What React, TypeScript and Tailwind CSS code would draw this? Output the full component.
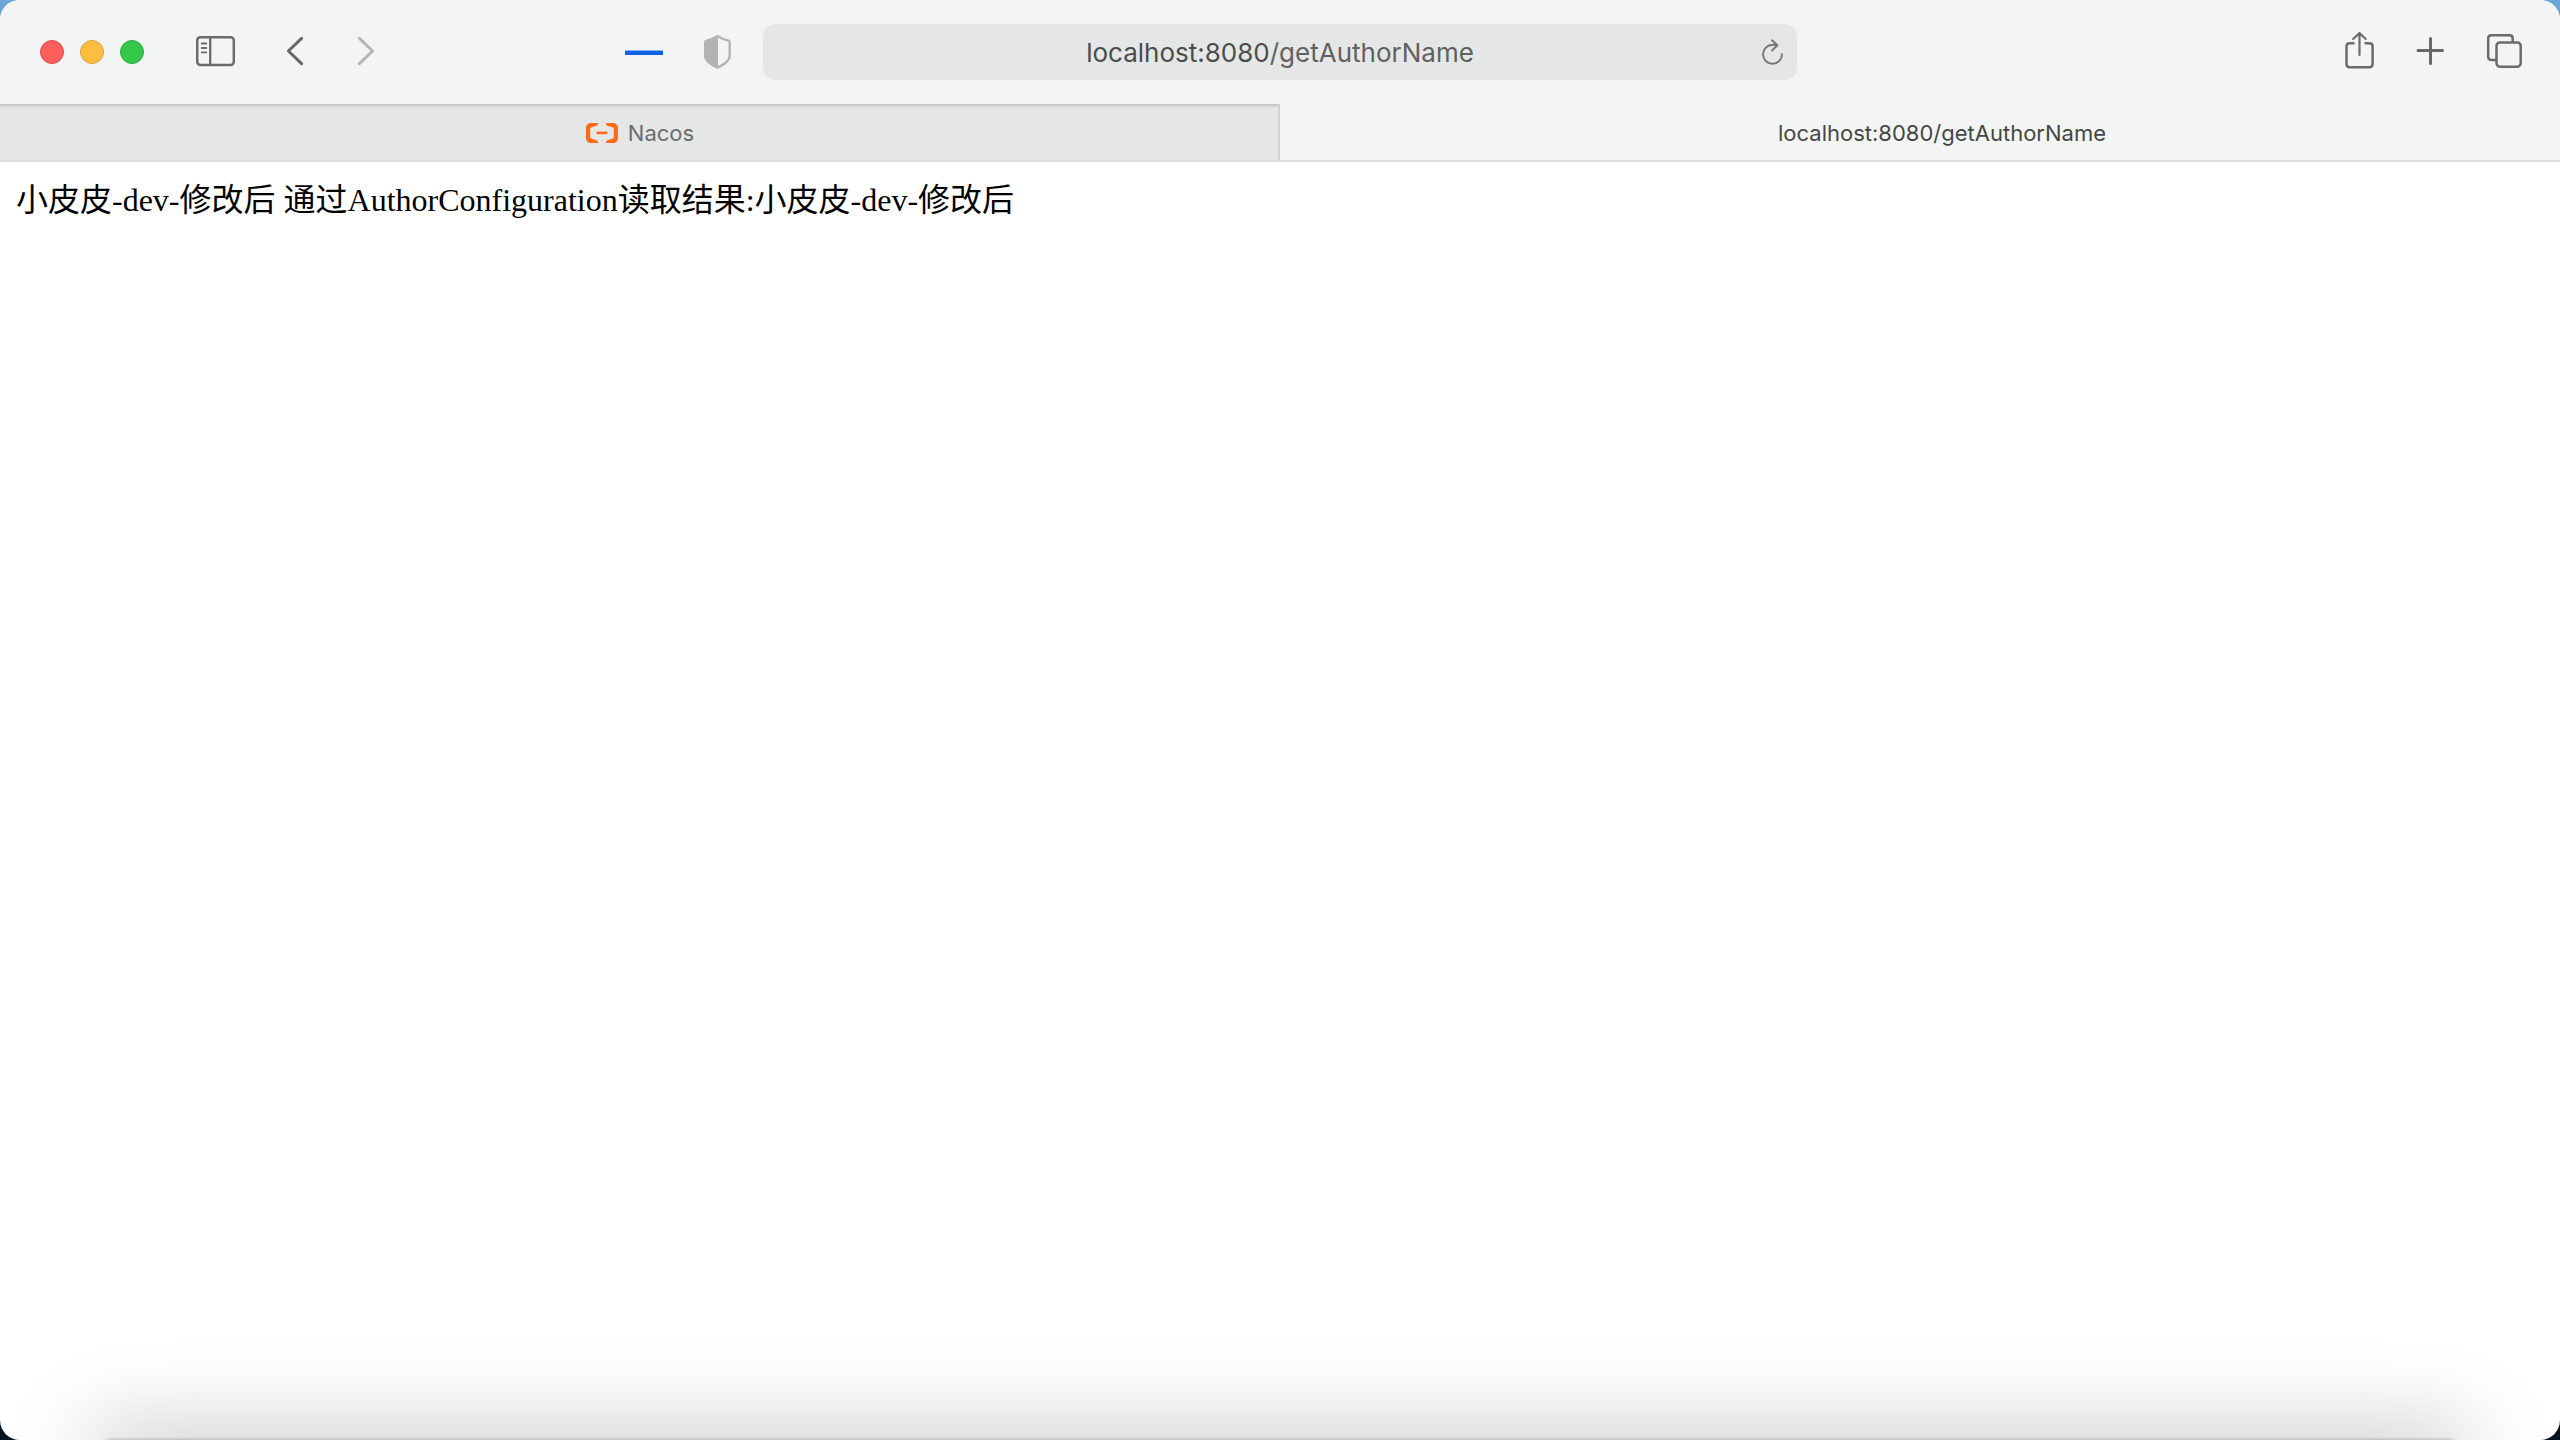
import React from "react";

function SidebarIcon() {
  return (
    <svg width="40" height="32" viewBox="0 0 40 32" fill="none" stroke="#6a6c6b" aria-hidden="true">
      <rect x="1.2" y="1.2" width="36.6" height="27.8" rx="3.2" strokeWidth="2.5" />
      <path d="M14.2 1.5V29" strokeWidth="2.3" />
      <path d="M5.7 7.5h4.6M5.7 12h4.6M5.7 16.4h4.6" strokeWidth="1.8" strokeLinecap="round" />
    </svg>
  );
}

function ChevronIcon({ forward = false }: { forward?: boolean }) {
  return (
    <svg
      width="20"
      height="32"
      viewBox="0 0 20 32"
      fill="none"
      stroke={forward ? "#b4b6b5" : "#666867"}
      strokeWidth="3"
      strokeLinecap="round"
      strokeLinejoin="round"
      aria-hidden="true"
    >
      <path d={forward ? "M3.4 2.3L16.6 15L3.4 27.6" : "M16.6 2.3L3.4 15L16.6 27.6"} />
    </svg>
  );
}

function ShieldIcon() {
  return (
    <svg width="28" height="34" viewBox="0 0 28 34" aria-hidden="true">
      <path
        d="M14.5 1.2C18 3.2 22.5 4.9 25.5 5.7C26.3 6 26.7 6.5 26.7 7.4V20.5C26.7 26.5 20 29.6 14.5 32.6C9 29.6 2.3 26.5 2.3 20.5V7.4C2.3 6.5 2.7 6 3.5 5.7C6.5 4.9 11 3.2 14.5 1.2Z"
        fill="none"
        stroke="#b2b4b3"
        strokeWidth="2.4"
      />
      <path d="M15 0.5C11 3 6.5 4.5 3 5.2C1.7 5.5 1.2 6 1.2 7V21C1.2 26.5 8.5 30 15 33.5Z" fill="#b2b4b3" />
    </svg>
  );
}

function ReloadIcon() {
  return (
    <svg
      width="24"
      height="28"
      viewBox="0 0 24 28"
      fill="none"
      stroke="#747675"
      strokeWidth="1.9"
      strokeLinecap="round"
      strokeLinejoin="round"
      aria-hidden="true"
    >
      <path d="M21 16.3A9.5 9.5 0 1 1 11.5 6.8Q14 6.5 16.3 7.3" />
      <path d="M11 2.3L16.4 7.3L11 12.5" />
    </svg>
  );
}

function ShareIcon() {
  return (
    <svg
      width="30"
      height="40"
      viewBox="0 0 30 40"
      fill="none"
      stroke="#6a6c6b"
      strokeWidth="2.5"
      strokeLinecap="round"
      strokeLinejoin="round"
      aria-hidden="true"
    >
      <path
        d="M10.5 11.2H5.6Q2.5 11.2 2.5 14.3V32Q2.5 35.2 5.6 35.2H25.4Q28.6 35.2 28.6 32V14.3Q28.6 11.2 25.4 11.2H20.5"
        strokeLinecap="butt"
      />
      <path d="M15.5 23V1.4M9.2 7L15.5 1L21.7 7" strokeWidth="2.2" />
    </svg>
  );
}

function PlusIcon() {
  return (
    <svg
      width="28"
      height="30"
      viewBox="0 0 28 30"
      fill="none"
      stroke="#666867"
      strokeWidth="3"
      strokeLinecap="round"
      aria-hidden="true"
    >
      <path d="M14.5 1.5V26.5M2 13.5H26.5" />
    </svg>
  );
}

function TabsIcon() {
  return (
    <svg width="36" height="36" viewBox="0 0 36 36" fill="none" stroke="#6a6c6b" strokeWidth="2.5" aria-hidden="true">
      <path d="M10 26H5.5Q2.2 26 2.2 22.7V4.5Q2.2 1.3 5.5 1.3H23.5Q26.7 1.3 26.7 4.5V8.5" />
      <rect x="10.5" y="8.5" width="24.2" height="24.2" rx="3.4" />
    </svg>
  );
}

function NacosIcon() {
  return (
    <svg width="32" height="20" viewBox="0 0 32 20" fill="#ff6a17" aria-hidden="true">
      <path d="M12.5 0H5.5C2 0 0 2 0 5V15C0 18 2 20 5.5 20H12.5L10.8 17.3L6.3 16C4.9 15.6 4.2 15 4.2 13.8V6.2C4.2 5 4.9 4.4 6.3 4L10.8 2.7Z" />
      <path d="M19.5 0H26.5C30 0 32 2 32 5V15C32 18 30 20 26.5 20H19.5L21.2 17.3L25.7 16C27.1 15.6 27.8 15 27.8 13.8V6.2C27.8 5 27.1 4.4 25.7 4L21.2 2.7Z" />
      <rect x="10.5" y="8.6" width="11" height="2.6" />
    </svg>
  );
}

export default function App() {
  return (
    <div className="min-h-screen bg-linear-to-b from-[#6ca5d6] to-[#04121f]">
      <div className="relative flex min-h-screen flex-col overflow-hidden rounded-[20px] bg-white font-[Inter,'Noto_Sans_CJK_SC',sans-serif]">
        <header className="bg-[#f3f5f4]">
          <div className="grid h-[104px] grid-cols-[1fr_minmax(0,1034px)_1fr] items-center">
            <div className="flex items-center pl-10">
              <div className="flex gap-4">
                <button aria-label="Close" className="size-6 rounded-full border border-[#e2484a] bg-[#fe5f5c]" />
                <button aria-label="Minimize" className="size-6 rounded-full border border-[#dfa03a] bg-[#febc40]" />
                <button aria-label="Zoom" className="size-6 rounded-full border border-[#2bac3d] bg-[#35c84a]" />
              </div>
              <button aria-label="Sidebar" className="ml-[52px]">
                <SidebarIcon />
              </button>
              <button aria-label="Back" className="ml-[49px]">
                <ChevronIcon />
              </button>
              <button aria-label="Forward" className="ml-[51px]">
                <ChevronIcon forward />
              </button>
              <div className="ml-auto flex items-center gap-10 pr-8">
                <span className="h-[5px] w-[38px] border-t border-[#8fb2ee] bg-[#0f62e6]" />
                <button aria-label="Privacy report">
                  <ShieldIcon />
                </button>
              </div>
            </div>
            <div className="flex h-14 items-center rounded-xl bg-[#e5e7e6] px-3">
              <span className="w-6" />
              <a href="#" className="flex-1 pt-0.5 text-center text-[26px] leading-8 text-[#5f6160]">
                <span className="text-[#4b4d4c]">localhost:8080</span>/getAuthorName
              </a>
              <button aria-label="Reload">
                <ReloadIcon />
              </button>
            </div>
            <div className="flex items-center justify-end gap-[42px] pr-[38px]">
              <button aria-label="Share">
                <ShareIcon />
              </button>
              <button aria-label="New tab">
                <PlusIcon />
              </button>
              <button aria-label="Show all tabs">
                <TabsIcon />
              </button>
            </div>
          </div>
          <nav className="grid grid-cols-2 border-b-2 border-[#dcdddd] text-[22px] leading-8">
            <button className="flex h-14 items-center justify-center gap-2.5 border-r-2 border-[#cfd1d0] bg-[#e5e7e6] bg-linear-to-b from-[#bfc1c0] to-[#e5e7e6] to-[4px] pt-0.5 pl-0.5 text-[#6b6d6c]">
              <NacosIcon />
              Nacos
            </button>
            <button className="flex h-14 items-center justify-center pt-0.5 pl-11 text-[#454746]">
              localhost:8080/getAuthorName
            </button>
          </nav>
        </header>
        <main className="flex-1 px-4 py-3.5 font-['Liberation_Serif','Noto_Sans_CJK_SC',serif] text-[32px] leading-[48px] text-black">
          小皮皮-dev-修改后 通过AuthorConfiguration读取结果:小皮皮-dev-修改后
        </main>
        <div className="absolute inset-x-24 -bottom-8 h-8 rounded-full shadow-[0_0_84px_10px_rgba(0,0,0,0.25),0_0_3px_1px_rgba(0,0,0,0.2)]" />
      </div>
    </div>
  );
}
